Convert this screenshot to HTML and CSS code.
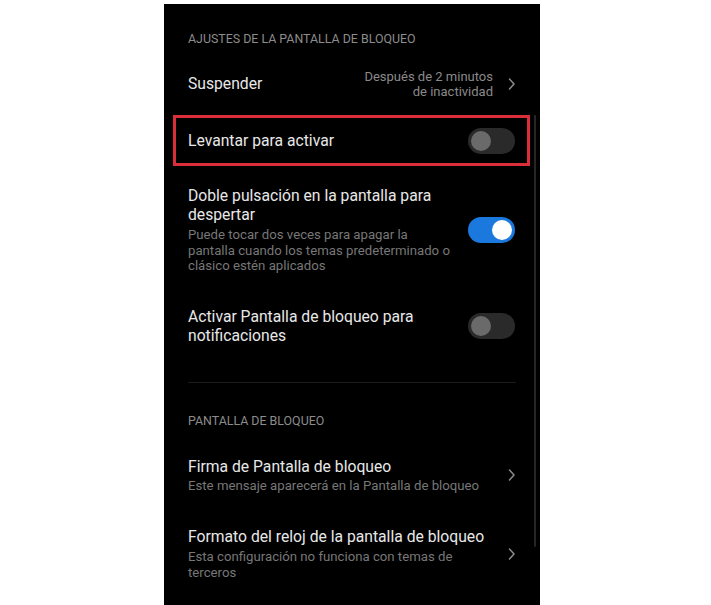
FILE: index.html
```html
<!DOCTYPE html>
<html lang="es">
<head>
<meta charset="utf-8">
<link rel="stylesheet" href="styles.css">
</head>
<body>
<div class="screen">
  <div class="scrollbar"></div>
  <div class="section-header first">AJUSTES DE LA PANTALLA DE BLOQUEO</div>

  <div class="row row-suspend">
    <div class="text"><div class="title">Suspender</div></div>
    <div class="value">Después de 2 minutos<br>de inactividad</div>
    <svg class="chev" width="8" height="14" viewBox="0 0 8 14"><polyline points="1.5,2 6,7 1.5,12" fill="none" stroke="#8c8c8c" stroke-width="1.5" stroke-linecap="round" stroke-linejoin="round"/></svg>
  </div>

  <div class="row row-highlight">
    <div class="text"><div class="title">Levantar para activar</div></div>
    <div class="toggle"><div class="thumb"></div></div>
  </div>

  <div class="row row-double">
    <div class="text">
      <div class="title">Doble pulsación en la pantalla para despertar</div>
      <div class="sub">Puede tocar dos veces para apagar la pantalla cuando los temas predeterminado o clásico estén aplicados</div>
    </div>
    <div class="toggle on"><div class="thumb"></div></div>
  </div>

  <div class="row row-notif">
    <div class="text">
      <div class="title">Activar Pantalla de bloqueo para notificaciones</div>
    </div>
    <div class="toggle"><div class="thumb"></div></div>
  </div>

  <div class="divider"></div>

  <div class="section-header second">PANTALLA DE BLOQUEO</div>

  <div class="row row-sign">
    <div class="text">
      <div class="title">Firma de Pantalla de bloqueo</div>
      <div class="sub">Este mensaje aparecerá en la Pantalla de bloqueo</div>
    </div>
    <svg class="chev" width="8" height="14" viewBox="0 0 8 14"><polyline points="1.5,2 6,7 1.5,12" fill="none" stroke="#8c8c8c" stroke-width="1.5" stroke-linecap="round" stroke-linejoin="round"/></svg>
  </div>

  <div class="row row-clock">
    <div class="text">
      <div class="title">Formato del reloj de la pantalla de bloqueo</div>
      <div class="sub">Esta configuración no funciona con temas de terceros</div>
    </div>
    <svg class="chev" width="8" height="14" viewBox="0 0 8 14"><polyline points="1.5,2 6,7 1.5,12" fill="none" stroke="#8c8c8c" stroke-width="1.5" stroke-linecap="round" stroke-linejoin="round"/></svg>
  </div>
</div>
</body>
</html>
```

FILE: styles.css
```css
html, body {
  margin: 0;
  padding: 0;
  background: #ffffff;
}

body {
  padding-top: 4px;
  padding-left: 164px;
  font-family: Roboto, "Noto Sans", "Liberation Sans", sans-serif;
}

.screen {
  position: relative;
  width: 376px;
  height: 601px;
  background: #000000;
  overflow: hidden;
  display: flex;
  flex-direction: column;
}

.screen > * {
  flex-shrink: 0;
}

.scrollbar {
  position: absolute;
  left: 370px;
  top: 111px;
  width: 2px;
  height: 432px;
  background: #262626;
  border-radius: 1px;
}

.section-header {
  padding: 0 24px;
  font-size: 12.4px;
  line-height: 16px;
  color: #8c8c8c;
}

.section-header.first {
  padding-top: 27px;
  padding-bottom: 5px;
}

.section-header.second {
  padding-top: 30px;
  padding-bottom: 11px;
}

.row {
  display: flex;
  align-items: center;
  padding: 0 25px 0 24px;
}

.text {
  flex: 1;
  min-width: 0;
}

.title {
  font-size: 15.7px;
  line-height: 19px;
  color: #e8e8e8;
}

.sub {
  margin-top: 3px;
  font-size: 13.2px;
  line-height: 15.5px;
  color: #777777;
}

.row-suspend {
  height: 63px;
}

.value {
  text-align: right;
  font-size: 13px;
  line-height: 15px;
  color: #8a8a8a;
  margin-right: 15px;
}

.chev {
  flex: none;
  display: block;
  margin-right: -1px;
}

.row-highlight {
  height: 45px;
  margin: 0 10px 0 9px;
  border: 3px solid #da2f3a;
  padding: 0 12px 0 12px;
}

.row-double {
  padding-top: 20px;
  padding-bottom: 15px;
}

.row-double .text {
  padding-right: 8px;
}

.row-double .sub {
  max-width: 266px;
}

.row-notif {
  padding-top: 18px;
  padding-bottom: 18px;
}

.row-notif .text {
  padding-right: 20px;
}

.divider {
  margin: 19px 24px 0 24px;
  height: 1px;
  background: #1c1c1c;
}

.row-sign {
  padding-top: 17px;
  padding-bottom: 17px;
}

.row-sign .sub {
  margin-top: 2px;
}

.row-clock {
  padding-top: 17px;
  padding-bottom: 17px;
}

.row-clock .text {
  padding-right: 8px;
}

.row-clock .sub {
  padding-right: 40px;
}

.toggle {
  flex: none;
  position: relative;
  width: 47px;
  height: 26px;
  border-radius: 13px;
  background: #2a2a2a;
}

.toggle .thumb {
  position: absolute;
  top: 3px;
  left: 3px;
  width: 20px;
  height: 20px;
  border-radius: 50%;
  background: #6a6a6a;
}

.toggle.on {
  background: #1b78dc;
}

.toggle.on .thumb {
  left: 24px;
  background: #ffffff;
}
```
